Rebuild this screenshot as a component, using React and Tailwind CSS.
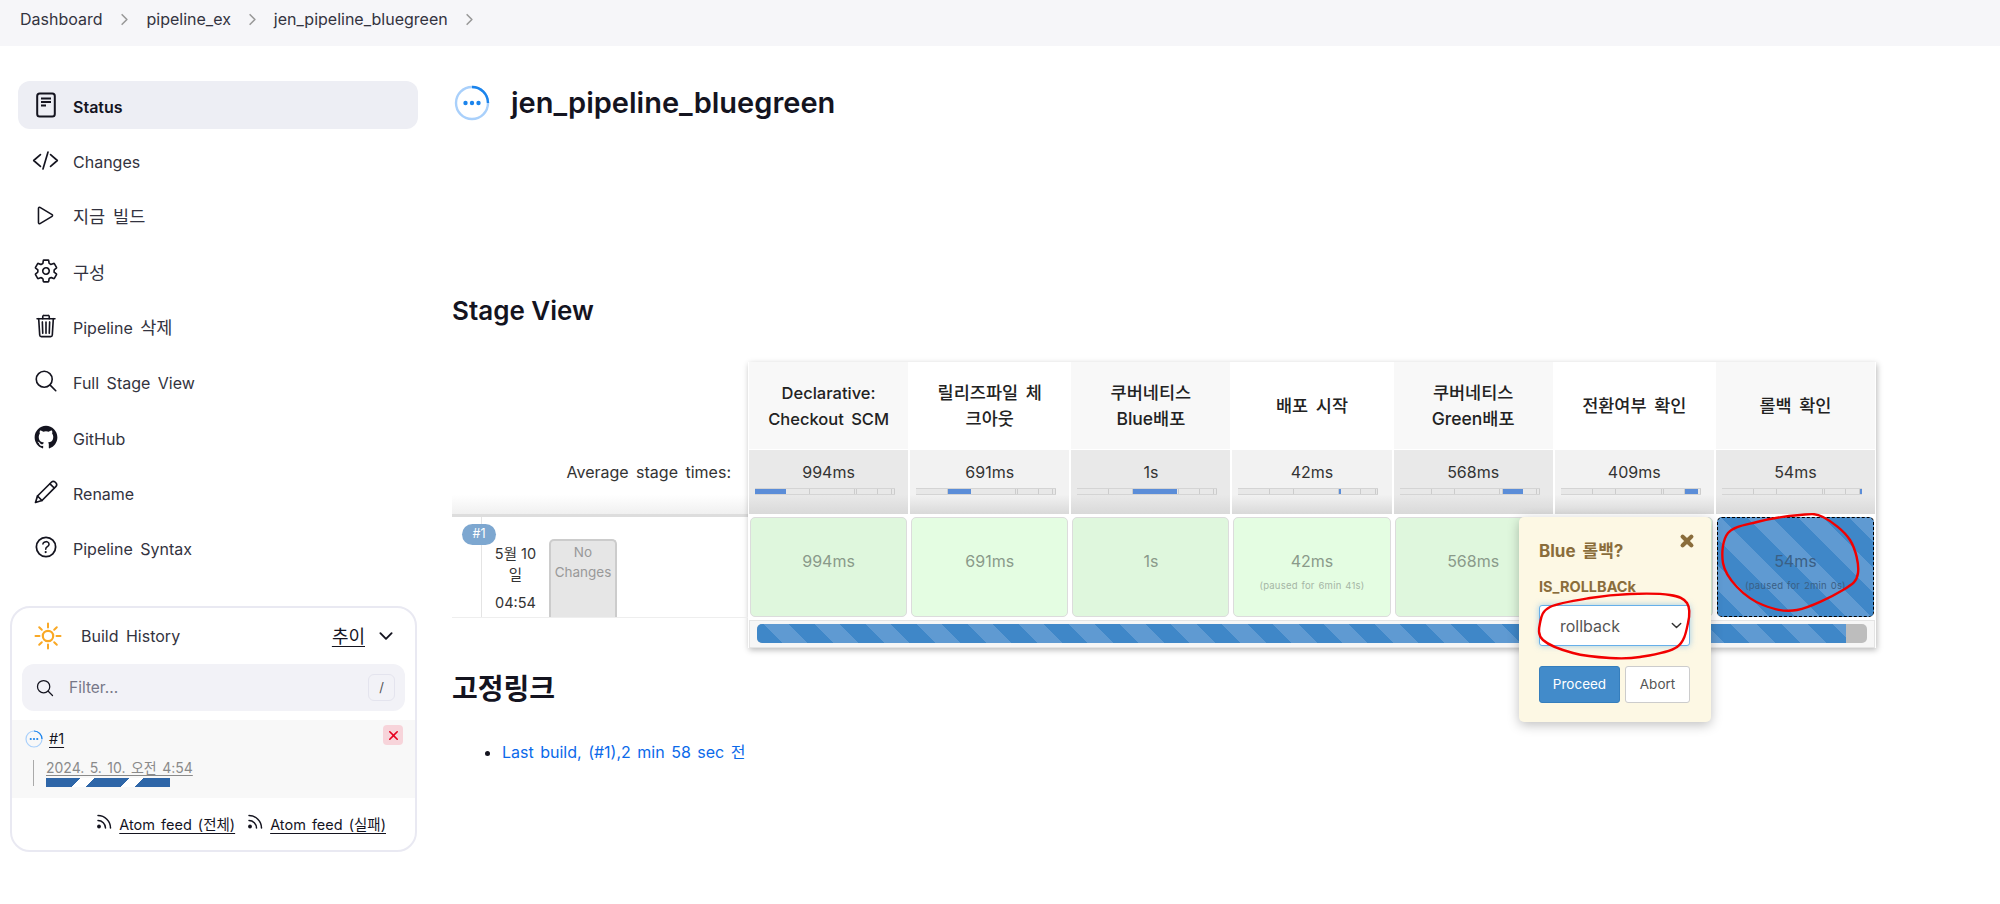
import React from "react";
import {
  IoCodeSlashOutline, IoPlayOutline, IoSettingsOutline, IoTrashOutline, IoSearchOutline,
  IoLogoGithub, IoHelpCircleOutline, IoChevronDown, IoChevronForward, IoClose,
} from "react-icons/io5";

const FONT = "font-['Inter','Noto_Sans_CJK_KR',sans-serif]";

function DocIcon() {
  return (
    <svg width="24" height="26" viewBox="0 0 24 26" fill="none" stroke="#14141f">
      <rect x="3.2" y="1.5" width="17.6" height="23" rx="2.5" strokeWidth="2" />
      <path d="M7 6.5h10M7 10h10M7 13.5h5" strokeWidth="1.8" />
    </svg>
  );
}

function PencilIcon() {
  return (
    <svg width="26" height="26" viewBox="0 0 26 26" fill="none" stroke="#14141f" strokeWidth="1.7" strokeLinejoin="round" strokeLinecap="round">
      <path d="M2.5 23.5l2-6.5L18.6 3a2.4 2.4 0 0 1 3.4 0l1 1a2.4 2.4 0 0 1 0 3.4L9 21.5z" />
      <path d="M17 4.8l4.2 4.2M4.5 17l4.5 4.5" />
    </svg>
  );
}

function RssIcon() {
  return (
    <svg width="17" height="17" viewBox="0 0 17 17" fill="none" stroke="#14141f" strokeWidth="1.5" strokeLinecap="round" className="mt-[-7px]">
      <circle cx="3" cy="13.5" r="1.9" fill="#14141f" stroke="none" />
      <path d="M2 7.5a7.5 7.5 0 0 1 7.5 7.5" />
      <path d="M2 2.5A12.5 12.5 0 0 1 14.5 15" />
    </svg>
  );
}

function StatusIcon({ size }) {
  return (
    <svg width={size} height={size} viewBox="0 0 36 36" fill="none">
      <circle cx="18" cy="18" r="16" stroke="#a9d0fb" strokeWidth="2.4" />
      <path d="M18 2a16 16 0 0 1 16 16" stroke="#1b84ec" strokeWidth="2.4" />
      <circle cx="11.5" cy="18" r="2.2" fill="#1b84ec" />
      <circle cx="18" cy="18" r="2.2" fill="#1b84ec" />
      <circle cx="24.5" cy="18" r="2.2" fill="#1b84ec" />
    </svg>
  );
}

function SunIcon() {
  return (
    <svg width="28" height="28" viewBox="0 0 28 28" fill="none" stroke="#f9a825" strokeWidth="2" strokeLinecap="round">
      <circle cx="14" cy="14" r="5.2" strokeWidth="2.2" />
      <path d="M14 1.5v4M14 22.5v4M1.5 14h4M22.5 14h4M5.2 5.2l2.6 2.6M20.2 20.2l2.6 2.6M5.2 22.8l2.6-2.6M20.2 7.8l2.6-2.6" />
    </svg>
  );
}

function Ko({ children }) {
  return <span className="text-[17.5px]">{children}</span>;
}

const NAV = [
  ["status", <DocIcon />, "Status", true],
  ["changes", <IoCodeSlashOutline size={27} />, "Changes"],
  ["build", <IoPlayOutline size={25} />, <Ko>지금 빌드</Ko>],
  ["config", <IoSettingsOutline size={26} />, <Ko>구성</Ko>],
  ["delete", <IoTrashOutline size={26} />, <>Pipeline <Ko>삭제</Ko></>],
  ["full", <IoSearchOutline size={26} />, "Full Stage View"],
  ["github", <IoLogoGithub size={26} />, "GitHub"],
  ["rename", <PencilIcon />, "Rename"],
  ["syntax", <IoHelpCircleOutline size={28} />, "Pipeline Syntax"],
];

const SEGMENTS = [33, 24, 47, 1.5, 21, 14, 2];

const STAGES = [
  { name: ["Declarative:", "Checkout SCM"], avg: "994ms", odd: true, latin: true },
  { name: ["릴리즈파일 체", "크아웃"], avg: "691ms" },
  { name: ["쿠버네티스", "Blue배포"], avg: "1s", odd: true },
  { name: ["배포 시작"], avg: "42ms", paused: "(paused for 6min 41s)" },
  { name: ["쿠버네티스", "Green배포"], avg: "568ms", odd: true },
  { name: ["전환여부 확인"], avg: "409ms", covered: true },
  { name: ["롤백 확인"], avg: "54ms", odd: true, paused: "(paused for 2min 0s)", running: true },
];

const STRIPES = "bg-[repeating-linear-gradient(45deg,#3f87c8_0,#3f87c8_18px,#5f9ad2_18px,#5f9ad2_36px)]";

function TimeBar({ active }) {
  return (
    <div className="flex w-[140px] h-[7px] ml-[6px] mt-[6px] overflow-hidden border-y border-[#d4d4d4] bg-[#e6e6e6]">
      {SEGMENTS.map((w, i) => (
        <div
          key={i}
          style={{ flexGrow: w, flexBasis: 0 }}
          className={i === active ? "bg-[#5b8dd8]" : "bg-[#e8e8e8] border-r border-[#cccccc]"}
        />
      ))}
    </div>
  );
}

function StageColumn({ stage, index }) {
  return (
    <div className="flex flex-col items-stretch">
      <div className={`h-[87px] flex flex-col items-center justify-center leading-[26px] font-medium text-[#222] mx-[1px] [word-spacing:3px] ${stage.latin ? "text-[16.5px]" : "text-[17.5px]"} ${stage.odd ? "bg-[#f8f8f8]" : "bg-white"}`}>
        {stage.name.map((n) => <div key={n}>{n}</div>)}
      </div>
      <div className={`h-[64px] mt-[1px] mx-[1px] flex flex-col items-stretch pt-[12px] text-[16px] leading-[20px] text-[#333] bg-gradient-to-b from-transparent from-70% to-[#d9d9d9] ${stage.odd ? "bg-[#e9e9e9]" : "bg-[#f2f2f2]"}`}>
        <div className="text-center">{stage.avg}</div>
        <TimeBar active={index} />
      </div>
      <div className={`h-[100px] mt-[3px] mx-[2px] rounded-[5px] flex flex-col items-center pt-[33px] ${stage.running ? `${STRIPES} border border-dashed border-black text-[#3a5f85]` : `border border-[#dcdcdc] text-[#8a9a8a] ${stage.odd ? "bg-[#dff7dd]" : "bg-[#e4fde2]"}`}`}>
        {!stage.covered && <div className="text-[16px] leading-[20px]">{stage.avg}</div>}
        {stage.paused && <div className={`text-[9.5px] leading-[12px] mt-[9px] tracking-[0.2px] [word-spacing:1px] ${stage.running ? "" : "text-[#a5b5a5]"}`}>{stage.paused}</div>}
      </div>
    </div>
  );
}

function InputPopover() {
  return (
    <div className="absolute left-[1067px] top-[155px] w-[192px] h-[205px] bg-[#fdf8e4] rounded-[5px] shadow-[0_3px_12px_rgba(0,0,0,0.25)] px-[20px] pt-[24px] text-[#8a6d3b]">
      <div className="flex justify-between items-start">
        <div className="text-[17px] leading-[20px] font-bold [word-spacing:3px]">Blue 롤백?</div>
        <IoClose size={20} strokeWidth={60} className="text-[#8a6d3b] mt-[-10px] mr-[-6px] shrink-0" />
      </div>
      <div className="text-[14.5px] leading-[20px] font-bold mt-[16px]">IS_ROLLBACk</div>
      <div className="mt-[8px] w-[151px] h-[41px] bg-white border border-[#66afe9] rounded-[3px] shadow-[0_0_6px_rgba(102,175,233,0.6)] flex items-center justify-between pl-[20px] pr-[5px] text-[16px] text-[#555]">
        <span>rollback</span>
        <IoChevronDown size={15} strokeWidth={50} className="text-[#333]" />
      </div>
      <div className="flex gap-[5px] mt-[20px]">
        <button className="w-[81px] h-[37px] bg-[#428bca] border border-[#357ebd] rounded-[3px] text-white text-[13.5px]">Proceed</button>
        <button className="w-[65px] h-[37px] bg-white border border-[#cccccc] rounded-[3px] text-[#555] text-[13.5px]">Abort</button>
      </div>
    </div>
  );
}

function smooth(pts) {
  const n = pts.length;
  let d = `M${pts[0][0]} ${pts[0][1]}`;
  for (let i = 0; i < n; i++) {
    const p0 = pts[(i - 1 + n) % n], p1 = pts[i], p2 = pts[(i + 1) % n], p3 = pts[(i + 2) % n];
    d += ` C${p1[0] + (p2[0] - p0[0]) / 6} ${p1[1] + (p2[1] - p0[1]) / 6} ${p2[0] - (p3[0] - p1[0]) / 6} ${p2[1] - (p3[1] - p1[1]) / 6} ${p2[0]} ${p2[1]}`;
  }
  return d;
}

const LOOP_A = [[1800, 515], [1823, 517], [1850, 540], [1858, 573], [1843, 590], [1797, 610], [1763, 605], [1737, 587], [1723, 563], [1728, 533], [1757, 522]];
const LOOP_B = [[1687, 603], [1688, 623], [1677, 647], [1640, 657], [1610, 658], [1573, 653], [1543, 640], [1540, 623], [1550, 607], [1590, 598], [1630, 594], [1670, 595]];

function Annotations() {
  return (
    <svg className="absolute left-0 top-0 pointer-events-none" width="2000" height="904" fill="none" stroke="#f20000" strokeWidth="2.4">
      <path d={smooth(LOOP_A)} />
      <path d={smooth(LOOP_B)} />
    </svg>
  );
}

function BuildHistory() {
  return (
    <div className="ml-[10px] mt-[35px] w-[407px] h-[246px] border-2 border-[#e9e9f2] rounded-[20px] bg-white text-[#333340]">
      <div className="flex items-center h-[56px] pl-[22px] pr-[19px]">
        <SunIcon />
        <span className="ml-[19px] text-[16px] [word-spacing:3px]">Build History</span>
        <span className="ml-auto text-[18px] underline underline-offset-[3px] text-[#14141f]">추이</span>
        <IoChevronDown size={20} className="ml-[11px] text-[#14141f]" />
      </div>
      <div className="mx-[10px] h-[47px] rounded-[12px] bg-[#f2f2f7] flex items-center pl-[13px] pr-[10px]">
        <IoSearchOutline size={20} className="text-[#14141f]" />
        <span className="ml-[14px] text-[15.5px] text-[#777788]">Filter...</span>
        <span className="ml-auto w-[27px] h-[27px] rounded-[6px] border border-[#e4e4ee] flex items-center justify-center text-[13px] text-[#555]">/</span>
      </div>
      <div className="mt-[9px] h-[78px] bg-[#f8f8f8] pl-[13px] pr-[12px] pt-[6px] relative">
        <div className="flex items-center h-[26px]">
          <StatusIcon size={18} />
          <span className="ml-[6px] text-[14.5px] underline underline-offset-[3px] text-[#14141f]">#1</span>
          <span className="ml-auto mt-[-8px] w-[20px] h-[20px] rounded-[4px] bg-[#f7d4da] flex items-center justify-center text-[#e6001f]">
            <IoClose size={17} />
          </span>
        </div>
        <div className="ml-[8px] mt-[8px] border-l border-[#aaaaaa] pl-[12px] h-[26px]">
          <div className="w-fit text-[14px] leading-[16px] text-[#8a8a8a] underline underline-offset-[2px] [word-spacing:1.5px]">2024. 5. 10. 오전 4:54</div>
          <div className="w-[124px] h-[9px] mt-[2px] bg-[repeating-linear-gradient(-45deg,#2e66a8_0,#2e66a8_25px,#ffffff_25px,#ffffff_35px)]" />
        </div>
      </div>
      <div className="flex items-center justify-end gap-[12px] mt-[16px] pr-[29px] text-[14.5px] text-[#14141f] [word-spacing:2px]">
        {["Atom feed (전체)", "Atom feed (실패)"].map((t) => (
          <div key={t} className="flex items-center gap-[6px]">
            <RssIcon />
            <span className="underline underline-offset-[3px]">{t}</span>
          </div>
        ))}
      </div>
    </div>
  );
}

export default function App() {
  return (
    <div className={`relative h-[904px] overflow-hidden bg-white ${FONT} text-[#14141f]`}>
      <div className="h-[46px] bg-[#f6f6f9] flex items-center pl-[20px] pb-[8px] text-[16px] text-[#333340]">
        <span>Dashboard</span>
        <IoChevronForward size={17} className="mx-[13.5px] text-[#999]" />
        <span>pipeline_ex</span>
        <IoChevronForward size={17} className="mx-[13px] text-[#999]" />
        <span>jen_pipeline_bluegreen</span>
        <IoChevronForward size={17} className="mx-[13px] text-[#999]" />
      </div>
      <div className="flex">
        <aside className="w-[452px] pt-[35px] shrink-0">
          <nav className="flex flex-col gap-[7.25px] pl-[18px] w-[418px]">
            {NAV.map(([id, icon, label, active]) => (
              <div key={id} className={`h-[48px] rounded-[12px] flex items-center ${active ? "bg-[#edeef4] font-semibold text-[#14141f]" : "text-[#333340]"}`}>
                <span className="w-[55px] flex justify-center text-[#14141f]">{icon}</span>
                <span className="text-[16px] pt-[4px] [word-spacing:3px]">{label}</span>
              </div>
            ))}
          </nav>
          <BuildHistory />
        </aside>
        <main className="flex-1 pt-[35px]">
          <div className="flex items-center h-[44px] pl-[2px]">
            <StatusIcon size={36} />
            <h1 className="ml-[21px] text-[29px] font-semibold text-[#14141f]">jen_pipeline_bluegreen</h1>
          </div>
          <h2 className="mt-[169px] text-[26px] leading-[34px] font-semibold">Stage View</h2>
          <div className="relative mt-[34px] flex w-[1424px]">
            <div className="w-[296px] pt-[88px] flex flex-col shrink-0">
              <div className="h-[64px] pt-[12px] pr-[17px] text-right text-[16px] leading-[20px] text-[#333] [word-spacing:3px] bg-gradient-to-b from-white from-70% to-[#f0f0f0]">Average stage times:</div>
              <div className="h-[3px] bg-[#dddddd]" />
              <div className="relative h-[101px] border-b border-[#eeeeee] flex pl-[29px]">
                <span className="absolute left-[10px] top-[7px] w-[34px] h-[21px] rounded-[11px] bg-[#7da7d0] text-white text-[12.5px] flex items-center justify-center">#1</span>
                <div className="w-[68px] border-l border-[#e4e4e4] pt-[26px] text-center text-[14.5px] leading-[21px] text-[#333]">
                  <div>5월 10</div>
                  <div>일</div>
                  <div className="mt-[7px]">04:54</div>
                </div>
                <div className="w-[68px] mt-[22px] bg-[#e6e6e6] border-2 border-[#cccccc] border-b-0 rounded-t-[5px] text-center text-[13.5px] leading-[20px] text-[#999] pt-[1px]">No Changes</div>
              </div>
            </div>
            <div className="w-[1128px] shadow-[1px_2px_6px_rgba(0,0,0,0.28)] bg-white">
              <div className="grid grid-cols-7">
                {STAGES.map((s, i) => <StageColumn key={i} stage={s} index={i} />)}
              </div>
              <div className="h-[28px] mt-[3px] mx-[1px] bg-[#f6f6f6] border border-[#e4e4e4] pl-[7px] pr-[7px] pt-[3px]">
                <div className="h-[19px] rounded-[5px] bg-[#bdbdbd] overflow-hidden">
                  <div className={`w-[1089px] h-full ${STRIPES}`} />
                </div>
              </div>
            </div>
            <InputPopover />
          </div>
          <h2 className="mt-[24px] text-[28px] leading-[34px] font-semibold">고정링크</h2>
          <ul className="mt-[34px] ml-[32px] list-disc text-[16px] leading-[24px] text-[#0b6aea] [word-spacing:2px]">
            <li className="ml-[18px] marker:text-[#14141f]">Last build, (#1),2 min 58 sec 전</li>
          </ul>
        </main>
      </div>
      <Annotations />
    </div>
  );
}
